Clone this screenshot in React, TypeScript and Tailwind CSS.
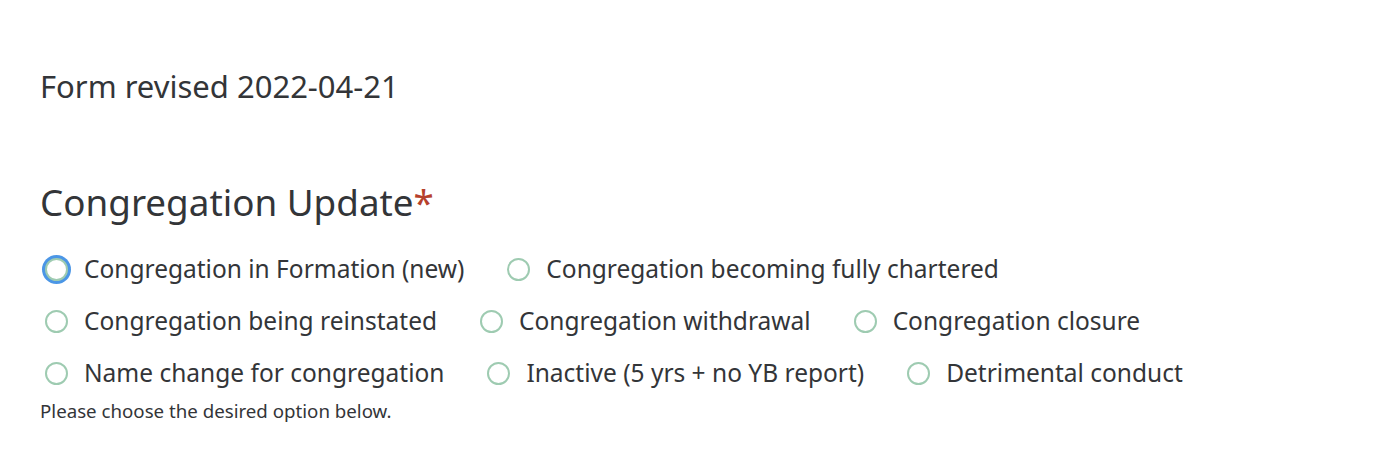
import React from "react";

const options = [
  "Congregation in Formation (new)",
  "Congregation becoming fully chartered",
  "Congregation being reinstated",
  "Congregation withdrawal",
  "Congregation closure",
  "Name change for congregation",
  "Inactive (5 yrs + no YB report)",
  "Detrimental conduct",
];

export default function App() {
  return (
    <div
      className="min-h-[462px] bg-white pl-[40px] pr-[40px] text-[#333538]"
      style={{ fontFamily: '"Noto Sans", "Open Sans", sans-serif' }}
    >
      <div className="pt-[63px] text-[31px] leading-[46px]">Form revised 2022-04-21</div>
      <div className="mt-[71px] text-[36.8px] leading-[44px]">
        Congregation Update<span className="text-[#b6412c]">*</span>
      </div>
      <div className="mt-[19px] flex flex-wrap w-[1250px]">
        {options.map((o, i) => (
          <label key={o} className="flex items-center h-[52px] mr-[38px]">
            <span
              className={
                "flex-none ml-[5px] w-[23px] h-[23px] rounded-full border-2 border-[#9ecbb1] bg-white " +
                (i === 0 ? "ring-[3px] ring-[#4b96e6]" : "")
              }
            />
            <span className="ml-[16px] text-[24.5px] leading-[32px] whitespace-nowrap">{o}</span>
          </label>
        ))}
      </div>
      <div className="-mt-[1px] text-[18.7px] leading-[26px]">Please choose the desired option below.</div>
    </div>
  );
}
